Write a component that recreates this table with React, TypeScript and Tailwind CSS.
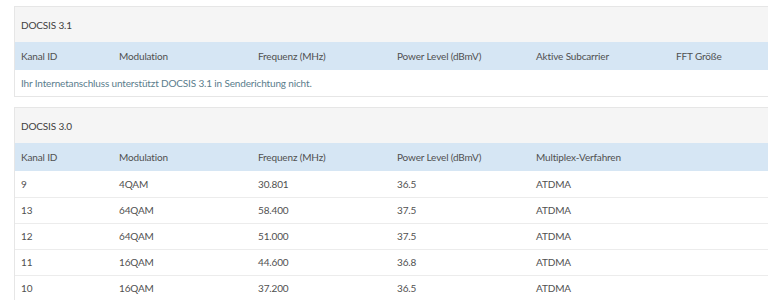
const cols = 'grid grid-cols-[98px_139px_139px_139px_140px_1fr]';

const rows30 = [
  ['9', '4QAM', '30.801', '36.5', 'ATDMA'],
  ['13', '64QAM', '58.400', '37.5', 'ATDMA'],
  ['12', '64QAM', '51.000', '37.5', 'ATDMA'],
  ['11', '16QAM', '44.600', '36.8', 'ATDMA'],
  ['10', '16QAM', '37.200', '36.5', 'ATDMA'],
];

function HeaderRow({ labels }: { labels: string[] }) {
  return (
    <div className={`${cols} h-[28px] items-center bg-[#d6e6f4] text-[#505050] pl-[6px]`}>
      {labels.map((l) => (
        <div key={l}>{l}</div>
      ))}
    </div>
  );
}

export default function App() {
  return (
    <div
      className="w-[768px] h-[300px] overflow-hidden bg-white text-[10px] tracking-[-0.15px]"
      style={{ fontFamily: '"Source Sans Pro", Lato, "Noto Sans", sans-serif' }}
    >
      <div className="ml-[14px] mt-[6px] w-[800px]">
        {/* DOCSIS 3.1 */}
        <div className="border border-[#e6e6e6]">
          <div className="h-[35px] flex items-center pl-[6px] bg-[#f5f5f5] text-[#404040] pt-[1px]">DOCSIS 3.1</div>
          <HeaderRow labels={['Kanal ID', 'Modulation', 'Frequenz (MHz)', 'Power Level (dBmV)', 'Aktive Subcarrier', 'FFT Größe']} />
          <div className="h-[26px] flex items-center pl-[6px] text-[#5a7d8c]">
            Ihr Internetanschluss unterstützt DOCSIS 3.1 in Senderichtung nicht.
          </div>
        </div>

        {/* DOCSIS 3.0 */}
        <div className="mt-[10px] border border-[#e6e6e6]">
          <div className="h-[35px] flex items-center pl-[6px] bg-[#f5f5f5] text-[#404040] pt-[1px]">DOCSIS 3.0</div>
          <HeaderRow labels={['Kanal ID', 'Modulation', 'Frequenz (MHz)', 'Power Level (dBmV)', 'Multiplex-Verfahren']} />
          {rows30.map((r, i) => (
            <div
              key={i}
              className={`${cols} h-[26px] items-center pl-[6px] text-[#505050] ${i > 0 ? 'border-t border-[#ececec]' : ''}`}
            >
              {r.map((c, j) => (
                <div key={j}>{c}</div>
              ))}
            </div>
          ))}
        </div>
      </div>
    </div>
  );
}
